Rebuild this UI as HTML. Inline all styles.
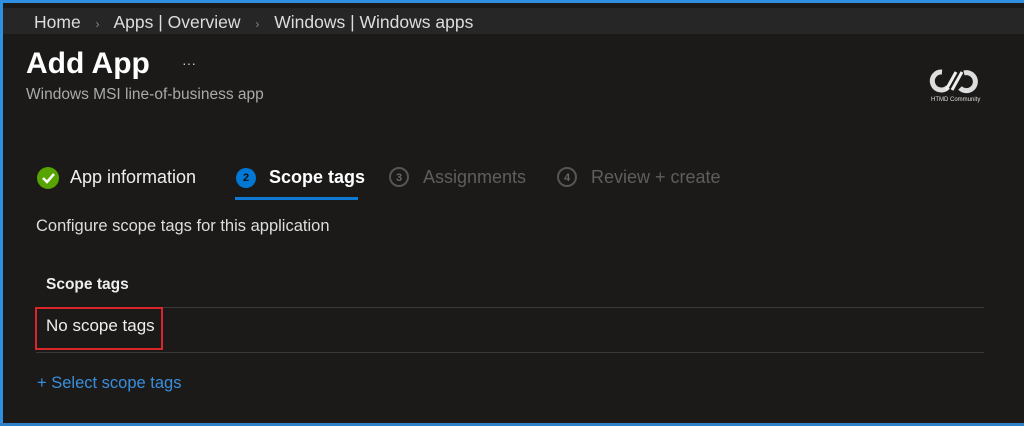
<!DOCTYPE html>
<html><head><style>
body{margin:0;width:1024px;height:426px;background:#1b1a19;position:relative;overflow:hidden;font-family:"Liberation Sans",sans-serif;color:#fff}
.a{position:absolute;white-space:nowrap}
.c{position:absolute;width:20px;height:20px;border-radius:50%;box-sizing:border-box;font-size:11px;font-weight:bold;text-align:center;line-height:18px}
</style></head><body>
<div class="a" style="left:0;top:0;width:1024px;height:3px;background:#2f8fe0"></div>
<div class="a" style="left:0;top:0;width:3px;height:426px;background:#2f8fe0"></div>
<div class="a" style="left:0;top:423px;width:1024px;height:3px;background:#2f7fc8"></div>
<div class="a" style="left:3px;top:8px;width:1021px;height:26px;background:#262626"></div>
<div class="a" style="left:34px;top:12px;font-size:17.5px;color:#ddd">Home <span style="color:#888;font-size:12px;margin:0 10px">›</span> Apps | Overview <span style="color:#888;font-size:12px;margin:0 10px">›</span> Windows | Windows apps</div>
<div class="a" style="left:26px;top:47px;font-size:30px;font-weight:bold">Add App</div>
<div class="a" style="left:182px;top:55px;font-size:14px;color:#ccc">···</div>
<div class="a" style="left:26px;top:86px;font-size:15.5px;color:#aaa">Windows MSI line-of-business app</div>
<svg class="a" style="left:928px;top:68px" width="52" height="28" viewBox="0 0 52 28"><path d="M14 4a9 9 0 1 0 6 15" stroke="#ddd" stroke-width="5" fill="none"/><path d="M32 20a9 9 0 1 0 4-15" stroke="#ddd" stroke-width="5" fill="none"/><path d="M18 22l10-18M24 22l10-18" stroke="#eee" stroke-width="3"/></svg>
<div class="a" style="left:931px;top:97px;font-size:6px;color:#ddd">HTMD Community</div>
<div class="c" style="left:37px;top:167px;background:#57a300;width:22px;height:22px"><svg width="22" height="22" style="position:absolute;left:0;top:0"><path d="M6 11l4 4 7-8" stroke="#fff" stroke-width="2.5" fill="none"/></svg></div>
<div class="a" style="left:70px;top:167px;font-size:18px;color:#eee">App information</div>
<div class="c" style="left:236px;top:168px;background:#0078d4;color:#111;line-height:20px">2</div>
<div class="a" style="left:269px;top:167px;font-size:18px;font-weight:bold">Scope tags</div>
<div class="a" style="left:235px;top:197px;width:123px;height:3px;background:#0f7ad6"></div>
<div class="c" style="left:389px;top:167px;border:2px solid #555;color:#666">3</div>
<div class="a" style="left:423px;top:167px;font-size:18px;color:#5e5e5e">Assignments</div>
<div class="c" style="left:557px;top:167px;border:2px solid #555;color:#666">4</div>
<div class="a" style="left:591px;top:167px;font-size:18px;color:#5e5e5e">Review + create</div>
<div class="a" style="left:36px;top:217px;font-size:16.5px;color:#ddd">Configure scope tags for this application</div>
<div class="a" style="left:46px;top:276px;font-size:15.5px;font-weight:bold;color:#eee">Scope tags</div>
<div class="a" style="left:36px;top:307px;width:948px;height:1px;background:#3a3a3a"></div>
<div class="a" style="left:46px;top:316px;font-size:17px;color:#eee">No scope tags</div>
<div class="a" style="left:35px;top:307px;width:128px;height:43px;border:2px solid #d9262b;box-sizing:border-box"></div>
<div class="a" style="left:36px;top:352px;width:948px;height:1px;background:#3a3a3a"></div>
<div class="a" style="left:37px;top:374px;font-size:16.5px;color:#3a8fdc">+ Select scope tags</div>
</body></html>
